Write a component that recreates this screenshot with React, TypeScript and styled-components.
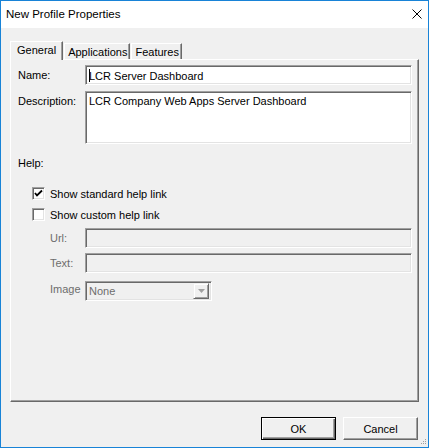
import React from 'react';
import styled, { createGlobalStyle, css } from 'styled-components';

const colors = {
    face: '#f0f0f0',
    border: '#1883d7',
    shadow: '#a0a0a0',
    darkShadow: '#696969',
    light: '#e3e3e3',
    white: '#ffffff',
    text: '#000000',
    grayText: '#6d6d6d',
};

const GlobalStyle = createGlobalStyle`
    html, body {
        margin: 0;
        padding: 0;
        background: ${colors.face};
    }
    body {
        font-family: "Liberation Sans", Arial, sans-serif;
        font-size: 11px;
        color: ${colors.text};
    }
`

const Window = styled.div`
    width: 429px;
    height: 448px;
    box-sizing: border-box;
    border: 1px solid ${colors.border};
    background: ${colors.face};
    display: flex;
    flex-direction: column;
    position: relative;
    overflow: hidden;
`

const TitleBar = styled.div`
    height: 26px;
    background: ${colors.white};
    display: flex;
    align-items: center;
    justify-content: space-between;
    padding: 0 6px 1px 5px;
    font-size: 11.5px;
`

const Body = styled.div`
    flex: 1;
    display: flex;
    flex-direction: column;
    padding: 13px 9px 0 9px;
`

const TabStrip = styled.div`
    display: flex;
    align-items: flex-end;
    height: 18px;
    position: relative;
    z-index: 1;
`

const Tab = styled.div<{ $active?: boolean }>`
    box-sizing: border-box;
    height: 16px;
    padding: 0 2px 0 3px;
    display: flex;
    align-items: center;
    border-top: 1px solid ${colors.white};
    border-left: 1px solid ${colors.white};
    border-right: 1px solid ${colors.darkShadow};
    box-shadow: inset -1px 0 ${colors.shadow};
    margin-left: 1px;
    ${(props) => props.$active && css`
        height: 19px;
        margin-bottom: -1px;
        margin-left: 0;
        padding: 0 6px 2px 6px;
        background: ${colors.face};
    `}
`

const Panel = styled.div`
    box-sizing: border-box;
    height: 343px;
    border-top: 1px solid ${colors.white};
    border-left: 1px solid ${colors.white};
    border-right: 1px solid ${colors.darkShadow};
    border-bottom: 1px solid ${colors.darkShadow};
    box-shadow: inset -1px -1px ${colors.shadow};
    padding: 5px 0 0 7px;
    display: flex;
    flex-direction: column;
`

const FieldGrid = styled.div`
    display: grid;
    grid-template-columns: 67px 327px;
    row-gap: 6px;
`

const Label = styled.label<{ $disabled?: boolean }>`
    display: flex;
    align-items: flex-start;
    padding-top: 4px;
    color: ${(props) => (props.$disabled ? colors.grayText : colors.text)};
`

const sunken = css`
    box-sizing: border-box;
    border: 1px solid;
    border-color: ${colors.shadow} ${colors.white} ${colors.white} ${colors.shadow};
    box-shadow: inset 1px 1px ${colors.darkShadow}, inset -1px -1px ${colors.light};
`

const TextBox = styled.div<{ $disabled?: boolean; $tall?: boolean }>`
    ${sunken}
    height: ${(props) => (props.$tall ? '53px' : '20px')};
    background: ${(props) => (props.$disabled ? colors.face : colors.white)};
    padding: 3px 3px 0 3px;
    white-space: nowrap;
    overflow: hidden;
`

const Caret = styled.span`
    display: inline-block;
    width: 1px;
    height: 13px;
    background: ${colors.text};
    vertical-align: -2px;
    margin-right: -1px;
`

const SectionLabel = styled.div`
    margin-top: 13px;
    line-height: 13px;
`

const CheckList = styled.div`
    display: flex;
    flex-direction: column;
    margin-top: 13px;
    padding-left: 14px;
`

const CheckRow = styled.label`
    display: flex;
    align-items: center;
    gap: 5px;
    height: 21px;
`

const CheckBox = styled.span`
    ${sunken}
    width: 13px;
    height: 13px;
    background: ${colors.white};
    display: flex;
    align-items: center;
    justify-content: center;
`

const SubGrid = styled.div`
    display: grid;
    grid-template-columns: 35px 327px;
    grid-auto-rows: 19px;
    row-gap: 6px;
    margin-top: 3px;
    padding-left: 32px;
    & > *:nth-child(n+5) {
        margin-top: 3px;
    }
`

const SubLabel = styled.span`
    display: flex;
    align-items: center;
    color: ${colors.grayText};
`

const Select = styled.div`
    ${sunken}
    width: 127px;
    height: 20px;
    background: ${colors.face};
    color: ${colors.grayText};
    display: flex;
    align-items: center;
    justify-content: space-between;
    padding: 0 2px 0 3px;
`

const DropButton = styled.span`
    box-sizing: border-box;
    width: 16px;
    height: 16px;
    border: 1px solid;
    border-color: ${colors.face} ${colors.darkShadow} ${colors.darkShadow} ${colors.face};
    box-shadow: inset 1px 1px ${colors.white}, inset -1px -1px ${colors.shadow};
    display: flex;
    align-items: center;
    justify-content: center;
`

const ButtonBar = styled.div`
    display: flex;
    justify-content: flex-end;
    gap: 7px;
    margin-top: 15px;
    padding-right: 1px;
`

const Button = styled.button<{ $default?: boolean }>`
    box-sizing: border-box;
    width: 75px;
    height: 23px;
    font-family: inherit;
    font-size: 11px;
    color: ${colors.text};
    background: ${colors.face};
    border: 1px solid;
    border-color: ${colors.white} ${colors.darkShadow} ${colors.darkShadow} ${colors.white};
    box-shadow: inset -1px -1px ${colors.shadow};
    padding: 0;
    ${(props) => props.$default && css`
        border: 1px solid ${colors.text};
        box-shadow: inset 1px 1px ${colors.white}, inset -1px -1px ${colors.darkShadow}, inset -2px -2px ${colors.shadow};
    `}
`

const Grip = styled.svg`
    position: absolute;
    right: 1px;
    bottom: 1px;
`

const CloseIcon = () => (
    <svg width="10" height="10" viewBox="0 0 10 10">
        <path d="M0.5 0.5 L9.5 9.5 M9.5 0.5 L0.5 9.5" stroke="#000" strokeWidth="1" />
    </svg>
)

const CheckMark = () => (
    <svg width="9" height="9" viewBox="0 0 9 9">
        <path d="M1 4 L3 6.5 L8 1.5" stroke="#000" strokeWidth="1.8" fill="none" />
    </svg>
)

const Arrow = () => (
    <svg width="7" height="4" viewBox="0 0 7 4">
        <path d="M0 0 H7 L3.5 4 Z" fill={colors.shadow} />
    </svg>
)

export default function App() {
    return <>
        <GlobalStyle />
        <Window>
            <TitleBar>
                <span>New Profile Properties</span>
                <CloseIcon />
            </TitleBar>
            <Body>
                <TabStrip>
                    <Tab $active>General</Tab>
                    <Tab>Applications</Tab>
                    <Tab>Features</Tab>
                </TabStrip>
                <Panel>
                    <FieldGrid>
                        <Label>Name:</Label>
                        <TextBox><Caret />LCR Server Dashboard</TextBox>
                        <Label>Description:</Label>
                        <TextBox $tall>LCR Company Web Apps Server Dashboard</TextBox>
                    </FieldGrid>
                    <SectionLabel>Help:</SectionLabel>
                    <CheckList>
                        <CheckRow>
                            <CheckBox><CheckMark /></CheckBox>
                            Show standard help link
                        </CheckRow>
                        <CheckRow>
                            <CheckBox />
                            Show custom help link
                        </CheckRow>
                    </CheckList>
                    <SubGrid>
                        <SubLabel>Url:</SubLabel>
                        <TextBox $disabled />
                        <SubLabel>Text:</SubLabel>
                        <TextBox $disabled />
                        <SubLabel>Image</SubLabel>
                        <Select>
                            None
                            <DropButton><Arrow /></DropButton>
                        </Select>
                    </SubGrid>
                </Panel>
                <ButtonBar>
                    <Button $default>OK</Button>
                    <Button>Cancel</Button>
                </ButtonBar>
            </Body>
            <Grip width="8" height="8" viewBox="0 0 8 8">
                <rect x="6" y="1" width="1" height="1" fill={colors.shadow} />
                <rect x="4" y="3" width="1" height="1" fill={colors.shadow} />
                <rect x="6" y="3" width="1" height="1" fill={colors.shadow} />
                <rect x="2" y="5" width="1" height="1" fill={colors.shadow} />
                <rect x="4" y="5" width="1" height="1" fill={colors.shadow} />
                <rect x="6" y="5" width="1" height="1" fill={colors.shadow} />
            </Grip>
        </Window>
    </>
}
